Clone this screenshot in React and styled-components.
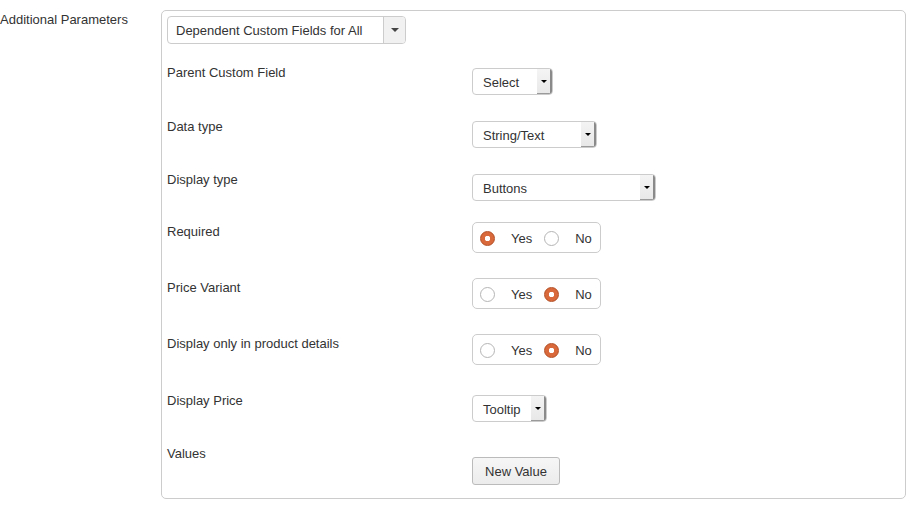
import React from 'react'
import styled, { createGlobalStyle } from 'styled-components'

const Global = createGlobalStyle`
  body {
    margin: 0;
    background: #fff;
    font-family: "Liberation Sans", Arial, sans-serif;
    font-size: 13px;
    color: #333;
  }
`

const Page = styled.div`
  display: flex;
  align-items: flex-start;
  width: 919px;
  height: 509px;
  padding-top: 10px;
  box-sizing: border-box;
`

const OuterLabel = styled.div`
  width: 161px;
  line-height: 20px;
`

const Fieldset = styled.div`
  width: 745px;
  height: 489px;
  box-sizing: border-box;
  border: 1px solid #ccc;
  border-radius: 5px;
  padding: 5px;
`

const TopSelect = styled.div`
  display: flex;
  width: 239px;
  height: 28px;
  box-sizing: border-box;
  border: 1px solid #ccc;
  border-radius: 4px;
  overflow: hidden;
  margin-bottom: 19px;
`

const TopSelectText = styled.div`
  flex: 1;
  padding-left: 8px;
  line-height: 28px;
  white-space: nowrap;
`

const TopSelectArrow = styled.div`
  width: 21px;
  border-left: 1px solid #ccc;
  background: #f1f1f1;
  display: flex;
  align-items: center;
  justify-content: center;

  &::after {
    content: '';
    border-left: 4px solid transparent;
    border-right: 4px solid transparent;
    border-top: 4px solid #444;
  }
`

const Row = styled.div`
  display: flex;
  align-items: flex-start;
  height: ${p => p.$h}px;
`

const Label = styled.div`
  width: 305px;
  flex: none;
  line-height: 20px;
  padding-top: ${p => p.$lp || 0}px;
`

const Control = styled.div`
  margin-top: ${p => p.$cp || 0}px;
`

const Select = styled.div`
  display: flex;
  width: ${p => p.$w}px;
  height: 27px;
  box-sizing: border-box;
  border: 1px solid #ccc;
  border-radius: 4px;
  background: #fff;
  overflow: hidden;
`

const SelectText = styled.div`
  flex: 1;
  padding-left: 10px;
  line-height: 27px;
  white-space: nowrap;
`

const SelectArrow = styled.div`
  width: 13px;
  background: linear-gradient(#f4f4f4, #e8e8e8);
  border-right: 2px solid #8a8a8a;
  border-bottom: 1px solid #9a9a9a;
  display: flex;
  align-items: center;
  justify-content: center;

  &::after {
    content: '';
    border-left: 3px solid transparent;
    border-right: 3px solid transparent;
    border-top: 3px solid #000;
  }
`

const RadioGroup = styled.div`
  display: flex;
  align-items: center;
  width: 129px;
  height: 31px;
  box-sizing: border-box;
  border: 1px solid #ccc;
  border-radius: 5px;
  padding-left: 7px;
  padding-top: 1px;
`

const Option = styled.div`
  display: flex;
  align-items: center;
  margin-right: 12px;
`

const Circle = styled.span`
  width: 15px;
  height: 15px;
  box-sizing: border-box;
  border-radius: 50%;
  border: 1px solid ${p => (p.$on ? '#b24e24' : '#b5b5b5')};
  background: ${p => (p.$on ? 'radial-gradient(circle, #fff 0 2.5px, #d9683a 3px)' : '#fff')};
  flex: none;
`

const OptionText = styled.span`
  margin-left: 16px;
`

const Button = styled.button`
  font-family: inherit;
  font-size: 13px;
  color: #333;
  width: 88px;
  height: 28px;
  border: 1px solid #bbb;
  border-radius: 3px;
  background: linear-gradient(#f6f6f6, #ececec);
  padding: 0;
`

function Radios({ value }) {
  return (
    <RadioGroup>
      <Option>
        <Circle $on={value === 'yes'} />
        <OptionText>Yes</OptionText>
      </Option>
      <Option>
        <Circle $on={value === 'no'} />
        <OptionText>No</OptionText>
      </Option>
    </RadioGroup>
  )
}

function Dropdown({ w, text }) {
  return (
    <Select $w={w}>
      <SelectText>{text}</SelectText>
      <SelectArrow />
    </Select>
  )
}

export default function App() {
  return (
    <>
      <Global />
      <Page>
        <OuterLabel>Additional Parameters</OuterLabel>
        <Fieldset>
          <TopSelect>
            <TopSelectText>Dependent Custom Fields for All</TopSelectText>
            <TopSelectArrow />
          </TopSelect>

          <Row $h={54}>
            <Label>Parent Custom Field</Label>
            <Control $cp={5}><Dropdown w={81} text="Select" /></Control>
          </Row>
          <Row $h={53}>
            <Label>Data type</Label>
            <Control $cp={4}><Dropdown w={125} text="String/Text" /></Control>
          </Row>
          <Row $h={52}>
            <Label>Display type</Label>
            <Control $cp={4}><Dropdown w={184} text="Buttons" /></Control>
          </Row>
          <Row $h={56}>
            <Label $lp={0}>Required</Label>
            <Control><Radios value="yes" /></Control>
          </Row>
          <Row $h={56}>
            <Label $lp={0}>Price Variant</Label>
            <Control><Radios value="no" /></Control>
          </Row>
          <Row $h={57}>
            <Label $lp={0}>Display only in product details</Label>
            <Control><Radios value="no" /></Control>
          </Row>
          <Row $h={53}>
            <Label>Display Price</Label>
            <Control $cp={4}><Dropdown w={75} text="Tooltip" /></Control>
          </Row>
          <Row $h={45}>
            <Label>Values</Label>
            <Control $cp={13}><Button>New Value</Button></Control>
          </Row>
        </Fieldset>
      </Page>
    </>
  )
}
